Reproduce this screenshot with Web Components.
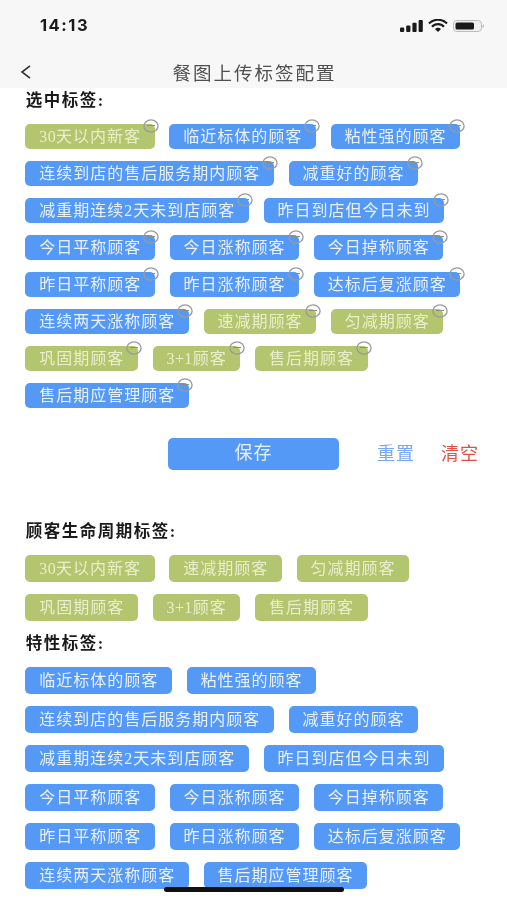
<!DOCTYPE html>
<html lang="zh">
<head>
<meta charset="utf-8">
<title>餐图上传标签配置</title>
<style>
  html, body { margin: 0; padding: 0; background: #fff; }
  body { font-family: "Liberation Serif", "Noto Sans CJK SC", sans-serif; }
  .num { letter-spacing: 0.4px; }
</style>
</head>
<body>
<app-screen>
  <status-bar></status-bar>
  <nav-bar>餐图上传标签配置</nav-bar>

  <tag-group heading="选中标签:" compact>
    <tag-chip color="green" removable><span class="num">30</span>天以内新客</tag-chip>
    <tag-chip removable>临近标体的顾客</tag-chip>
    <tag-chip removable>粘性强的顾客</tag-chip>
    <tag-chip removable>连续到店的售后服务期内顾客</tag-chip>
    <tag-chip removable>减重好的顾客</tag-chip>
    <tag-chip removable>减重期连续2天未到店顾客</tag-chip>
    <tag-chip removable>昨日到店但今日未到</tag-chip>
    <tag-chip removable>今日平称顾客</tag-chip>
    <tag-chip removable>今日涨称顾客</tag-chip>
    <tag-chip removable>今日掉称顾客</tag-chip>
    <tag-chip removable>昨日平称顾客</tag-chip>
    <tag-chip removable>昨日涨称顾客</tag-chip>
    <tag-chip removable>达标后复涨顾客</tag-chip>
    <tag-chip removable>连续两天涨称顾客</tag-chip>
    <tag-chip color="green" removable>速减期顾客</tag-chip>
    <tag-chip color="green" removable>匀减期顾客</tag-chip>
    <tag-chip color="green" removable>巩固期顾客</tag-chip>
    <tag-chip color="green" removable><span class="num">3+1</span>顾客</tag-chip>
    <tag-chip color="green" removable>售后期顾客</tag-chip>
    <tag-chip removable>售后期应管理顾客</tag-chip>
  </tag-group>

  <action-row></action-row>

  <tag-group heading="顾客生命周期标签:">
    <tag-chip color="green"><span class="num">30</span>天以内新客</tag-chip>
    <tag-chip color="green">速减期顾客</tag-chip>
    <tag-chip color="green">匀减期顾客</tag-chip>
    <tag-chip color="green">巩固期顾客</tag-chip>
    <tag-chip color="green"><span class="num">3+1</span>顾客</tag-chip>
    <tag-chip color="green">售后期顾客</tag-chip>
  </tag-group>

  <tag-group heading="特性标签:">
    <tag-chip>临近标体的顾客</tag-chip>
    <tag-chip>粘性强的顾客</tag-chip>
    <tag-chip>连续到店的售后服务期内顾客</tag-chip>
    <tag-chip>减重好的顾客</tag-chip>
    <tag-chip>减重期连续2天未到店顾客</tag-chip>
    <tag-chip>昨日到店但今日未到</tag-chip>
    <tag-chip>今日平称顾客</tag-chip>
    <tag-chip>今日涨称顾客</tag-chip>
    <tag-chip>今日掉称顾客</tag-chip>
    <tag-chip>昨日平称顾客</tag-chip>
    <tag-chip>昨日涨称顾客</tag-chip>
    <tag-chip>达标后复涨顾客</tag-chip>
    <tag-chip>连续两天涨称顾客</tag-chip>
    <tag-chip>售后期应管理顾客</tag-chip>
  </tag-group>

  <home-indicator></home-indicator>
</app-screen>

<script>
class AppScreen extends HTMLElement {
  constructor() {
    super();
    this.attachShadow({ mode: "open" });
    this.shadowRoot.innerHTML = `
      <style>
        :host {
          display: flex;
          flex-direction: column;
          position: relative;
          width: 507px;
          height: 900px;
          overflow: hidden;
          background: #fff;
          font-family: "Liberation Serif", "Noto Sans CJK SC", sans-serif;
          filter: blur(0.45px);
        }
      </style>
      <slot></slot>
    `;
  }
}

class StatusBar extends HTMLElement {
  constructor() {
    super();
    this.attachShadow({ mode: "open" });
    this.shadowRoot.innerHTML = `
      <style>
        :host {
          display: flex;
          align-items: center;
          justify-content: space-between;
          height: 52px;
          padding: 0 23px 0 40px;
          background: #f7f7f7;
          color: #1a1a1a;
        }
        .time {
          font: 700 16.5px/1 "Inter", "Liberation Sans", sans-serif;
          letter-spacing: 1.5px;
        }
        svg { display: block; }
      </style>
      <span class="time">14:13</span>
      <svg width="84" height="14" viewBox="0 0 84 14">
        <rect x="0" y="8.5" width="4.2" height="4.5" rx="1" fill="#1a1a1a"/>
        <rect x="6.2" y="6.5" width="4.2" height="6.5" rx="1" fill="#1a1a1a"/>
        <rect x="12.4" y="3.8" width="4.2" height="9.2" rx="1" fill="#1a1a1a"/>
        <rect x="18.6" y="1" width="4.2" height="12" rx="1" fill="#1a1a1a"/>
        <path d="M29 4.6a12.5 12.5 0 0 1 18 0M32 7.8a8 8 0 0 1 12 0" fill="none" stroke="#1a1a1a" stroke-width="2.1"/>
        <path d="M38 13l-3-3a4.2 4.2 0 0 1 6 0z" fill="#1a1a1a"/>
        <rect x="53.5" y="1.5" width="28" height="11" rx="3.4" fill="#f0f0f0" stroke="#bdbdbd" stroke-width="1"/>
        <rect x="55.5" y="3.5" width="18.5" height="7" rx="1.6" fill="#1a1a1a"/>
        <rect x="82.6" y="5.4" width="1.4" height="3.4" rx="0.7" fill="#bdbdbd"/>
      </svg>
    `;
  }
}

class NavBar extends HTMLElement {
  constructor() {
    super();
    this.attachShadow({ mode: "open" });
    this.shadowRoot.innerHTML = `
      <style>
        :host {
          display: flex;
          align-items: center;
          justify-content: center;
          position: relative;
          height: 37px;
          padding: 4px 0 0 2px;
          box-sizing: border-box;
          background: #f7f7f7;
          color: #4f4f4f;
          font-size: 18.5px;
          letter-spacing: 2px;
        }
        .back { position: absolute; left: 20px; top: 14px; display: block; }
      </style>
      <svg class="back" width="11" height="14" viewBox="0 0 11 14">
        <path d="M10 .8L2 7L10 13.2" fill="none" stroke="#333" stroke-width="1.6"/>
      </svg>
      <slot></slot>
    `;
  }
}

class TagGroup extends HTMLElement {
  constructor() {
    super();
    this.attachShadow({ mode: "open" });
    this.shadowRoot.innerHTML = `
      <style>
        :host {
          display: block;
          padding: 0 30px 0 25.3px;
          margin-bottom: 11px;
        }
        .heading {
          font-size: 16.5px;
          line-height: 22px;
          font-weight: 700;
          letter-spacing: 1.5px;
          color: #1a1a1a;
          margin: 1px 0 12px 0.5px;
        }
        .tags { display: flex; flex-wrap: wrap; gap: 12px 14.6px; }
        :host([compact]) { margin-bottom: 0; }
        :host([compact]) .heading { margin-top: 2px; margin-bottom: 12px; }
      </style>
      <div class="heading"></div>
      <div class="tags"><slot></slot></div>
    `;
  }

  connectedCallback() {
    this.shadowRoot.querySelector(".heading").textContent = this.getAttribute("heading");
  }
}

class TagChip extends HTMLElement {
  constructor() {
    super();
    this.attachShadow({ mode: "open" });
    this.shadowRoot.innerHTML = `
      <style>
        :host {
          display: block;
          position: relative;
          box-sizing: border-box;
          height: 27px;
          padding: 0 13.6px 0 14px;
          border-radius: 5px;
          background: #5599f7;
          color: #e8f1fe;
          font-size: 16px;
          line-height: 27px;
          letter-spacing: 1px;
          white-space: nowrap;
        }
        :host([color="green"]) { background: #b3c56e; color: #e9eecb; }
        :host([removable]) { height: 25px; line-height: 26px; }
        .close {
          display: none;
          position: absolute;
          top: -5px;
          right: -4.5px;
        }
        :host([removable]) .close { display: block; }
      </style>
      <slot></slot>
      <svg class="close" width="16" height="14" viewBox="0 0 16 14">
        <ellipse cx="8" cy="7" rx="7.1" ry="6.1" fill="none" stroke="#9a9a9a" stroke-width="1.3"/>
        <path d="M4 6.5h8" stroke="#8a9080" stroke-width="1"/>
      </svg>
    `;
  }
}

class ActionRow extends HTMLElement {
  constructor() {
    super();
    this.attachShadow({ mode: "open" });
    this.shadowRoot.innerHTML = `
      <style>
        :host {
          display: flex;
          align-items: center;
          height: 32px;
          margin: 30px 0 50px;
          padding-left: 168px;
          font-size: 18px;
          line-height: 30px;
          letter-spacing: 1px;
        }
        .save {
          width: 171px;
          height: 32px;
          line-height: 31px;
          text-align: center;
          border-radius: 5px;
          background: #5599f7;
          color: #e8f1fe;
        }
        .reset { margin-left: 38px; color: #77a9f0; }
        .clear { margin-left: 26px; color: #e0503f; }
      </style>
      <div class="save">保存</div>
      <span class="reset">重置</span>
      <span class="clear">清空</span>
    `;
  }
}

class HomeIndicator extends HTMLElement {
  constructor() {
    super();
    this.attachShadow({ mode: "open" });
    this.shadowRoot.innerHTML = `
      <style>
        :host {
          display: block;
          position: absolute;
          left: 164px;
          top: 887px;
          width: 180px;
          height: 5px;
          border-radius: 3px;
          background: #111;
        }
      </style>
    `;
  }
}

customElements.define("app-screen", AppScreen);
customElements.define("status-bar", StatusBar);
customElements.define("nav-bar", NavBar);
customElements.define("tag-group", TagGroup);
customElements.define("tag-chip", TagChip);
customElements.define("action-row", ActionRow);
customElements.define("home-indicator", HomeIndicator);
</script>
</body>
</html>
